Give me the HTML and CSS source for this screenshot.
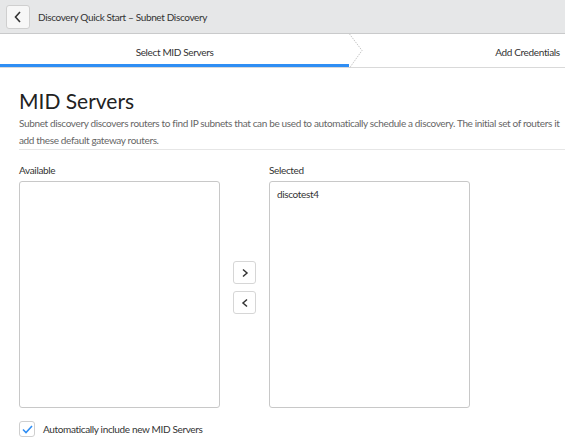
FILE: index.html
```html
<!DOCTYPE html>
<html lang="en">

<head>
    <meta charset="UTF-8">
    <title>Discovery Quick Start – Subnet Discovery</title>
    <link rel="stylesheet" href="styles.css">
</head>

<body>
    <div class="page">
        <header class="topbar">
            <button class="back-btn" aria-label="Back">
                <svg width="10" height="12" viewBox="0 0 10 12"><path d="M7 1 L2.5 6 L7 11" fill="none" stroke="#333" stroke-width="1.6"/></svg>
            </button>
            <span class="topbar-title">Discovery Quick Start – Subnet Discovery</span>
        </header>

        <nav class="steps">
            <div class="step active">Select MID Servers</div>
            <svg class="step-arrow" width="14" height="34" viewBox="0 0 14 34"><path d="M0.5 0 L13 16.5 L0.5 34" fill="none" stroke="#c8c8c8" stroke-width="1" stroke-dasharray="1.5 1"/></svg>
            <div class="step">Add Credentials</div>
        </nav>

        <main class="content">
            <h2 class="section-title">MID Servers</h2>
            <p class="section-desc">Subnet discovery discovers routers to find IP subnets that can be used to automatically schedule a discovery. The initial set of routers it<br>add these default gateway routers.</p>
            <hr class="divider">

            <div class="slushbucket">
                <div class="bucket">
                    <label class="bucket-label">Available</label>
                    <div class="bucket-box"></div>
                </div>
                <div class="bucket-controls">
                    <button class="move-btn" aria-label="Add">
                        <svg width="10" height="10" viewBox="0 0 10 10"><path d="M3 1.5 L7 5 L3 8.5" fill="none" stroke="#333" stroke-width="1.5"/></svg>
                    </button>
                    <button class="move-btn" aria-label="Remove">
                        <svg width="10" height="10" viewBox="0 0 10 10"><path d="M7 1.5 L3 5 L7 8.5" fill="none" stroke="#333" stroke-width="1.5"/></svg>
                    </button>
                </div>
                <div class="bucket">
                    <label class="bucket-label">Selected</label>
                    <div class="bucket-box">
                        <div class="bucket-item">discotest4</div>
                    </div>
                </div>
            </div>

            <label class="auto-include">
                <span class="checkbox">
                    <svg width="11" height="9" viewBox="0 0 11 9"><path d="M1 4.5 L4 7.5 L10 1" fill="none" stroke="#2f8ef4" stroke-width="1.6"/></svg>
                </span>
                Automatically include new MID Servers
            </label>
        </main>
    </div>
</body>

</html>
```

FILE: styles.css
```css
html,
body {
    margin: 0;
    padding: 0;
    overflow: hidden;
}

body {
    font-family: 'Lato', 'Liberation Sans', sans-serif;
    color: #333;
    background-color: white;
    letter-spacing: -0.35px;
}

.page {
    width: 692px;
}

.topbar {
    display: flex;
    align-items: center;
    height: 33px;
    padding: 0 6px;
    background-color: #e6e7e8;
    border-bottom: 1px solid #c9cacb;
    gap: 8px;
}

.back-btn {
    width: 24px;
    height: 24px;
    padding: 0;
    display: flex;
    align-items: center;
    justify-content: center;
    background-color: #f7f7f7;
    border: 1px solid #cfcfcf;
    border-radius: 3px;
}

.topbar-title {
    font-size: 10px;
    color: #333;
}

.steps {
    display: flex;
    height: 33px;
    border-bottom: 1px solid #d9d9d9;
}

.step {
    flex: 1;
    display: flex;
    align-items: center;
    justify-content: center;
    padding-top: 3px;
    font-size: 10px;
    color: #333;
}

.step.active {
    flex: none;
    width: 349px;
    box-shadow: inset 0 -3px 0 #2f8ef4;
}

.step-arrow {
    flex: none;
}

.content {
    padding: 20px 0 0 19px;
}

.section-title {
    margin: 0;
    font-size: 21px;
    font-weight: normal;
    letter-spacing: 0;
    color: #222;
}

.section-desc {
    margin: 2px 0 0;
    font-size: 10px;
    line-height: 17px;
    color: #666;
    white-space: nowrap;
}

.divider {
    margin: 0;
    border: none;
    border-top: 1px solid #e6e6e6;
}

.slushbucket {
    display: flex;
    align-items: stretch;
    margin-top: 14px;
}

.bucket {
    display: flex;
    flex-direction: column;
}

.bucket-label {
    font-size: 10px;
    color: #333;
    margin-bottom: 5px;
}

.bucket-box {
    width: 201px;
    height: 227px;
    border: 1px solid #c8c8c8;
    border-radius: 3px;
    box-sizing: border-box;
    padding: 6px 7px;
}

.bucket-item {
    font-size: 10px;
    color: #333;
}

.bucket-controls {
    width: 49px;
    display: flex;
    flex-direction: column;
    align-items: center;
    justify-content: center;
    gap: 7px;
    padding-top: 3px;
}

.move-btn {
    width: 23px;
    height: 23px;
    padding: 0;
    display: flex;
    align-items: center;
    justify-content: center;
    background-color: white;
    border: 1px solid #d6d6d6;
    border-radius: 3px;
}

.auto-include {
    display: flex;
    align-items: center;
    gap: 8px;
    margin-top: 13px;
    font-size: 10px;
    color: #333;
}

.checkbox {
    width: 14px;
    height: 14px;
    display: flex;
    align-items: center;
    justify-content: center;
    border: 1px solid #cfcfcf;
    border-radius: 3px;
}
```
